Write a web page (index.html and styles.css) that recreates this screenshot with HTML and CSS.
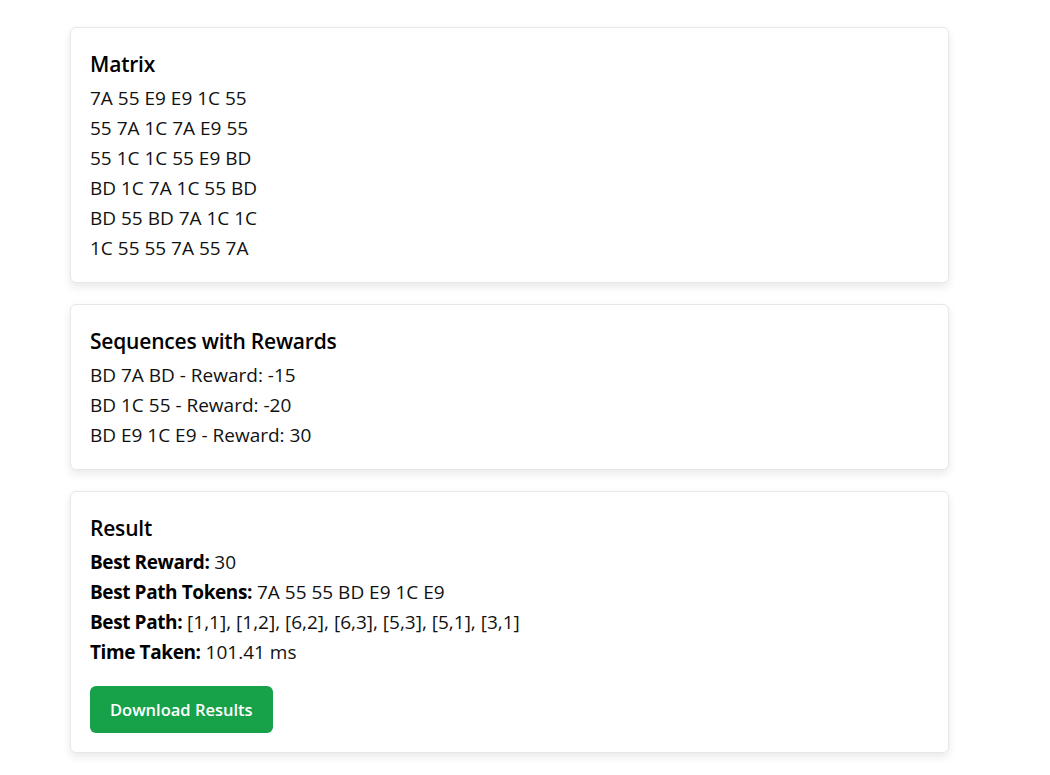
FILE: index.html
```html
<!DOCTYPE html>
<html>
<head>
<meta charset="utf-8">
<link rel="stylesheet" href="styles.css">
</head>
<body>
<div class="page">
  <section class="card">
    <h2 class="card-title">Matrix</h2>
    <div class="line">7A 55 E9 E9 1C 55</div>
    <div class="line">55 7A 1C 7A E9 55</div>
    <div class="line">55 1C 1C 55 E9 BD</div>
    <div class="line">BD 1C 7A 1C 55 BD</div>
    <div class="line">BD 55 BD 7A 1C 1C</div>
    <div class="line">1C 55 55 7A 55 7A</div>
  </section>
  <section class="card">
    <h2 class="card-title">Sequences with Rewards</h2>
    <div class="line">BD 7A BD - Reward: -15</div>
    <div class="line">BD 1C 55 - Reward: -20</div>
    <div class="line">BD E9 1C E9 - Reward: 30</div>
  </section>
  <section class="card">
    <h2 class="card-title">Result</h2>
    <div class="line"><strong>Best Reward:</strong> 30</div>
    <div class="line"><strong>Best Path Tokens:</strong> 7A 55 55 BD E9 1C E9</div>
    <div class="line"><strong>Best Path:</strong> [1,1], [1,2], [6,2], [6,3], [5,3], [5,1], [3,1]</div>
    <div class="line"><strong>Time Taken:</strong> 101.41 ms</div>
    <button class="btn">Download Results</button>
  </section>
</div>
</body>
</html>
```
FILE: styles.css
```css
html, body {
  margin: 0;
  padding: 0;
  background: #ffffff;
}
body {
  font-family: "Open Sans", "Noto Sans", sans-serif;
  color: #111111;
}
.page {
  padding: 27px 0 20px 70px;
  display: flex;
  flex-direction: column;
  gap: 21px;
  width: 879px;
}
.card {
  background: #fff;
  border: 1px solid #e5e7eb;
  border-radius: 6px;
  box-shadow: 0 4px 10px rgba(0, 0, 0, 0.09);
  padding: 19px;
  display: flex;
  flex-direction: column;
  align-items: flex-start;
}
.card-title {
  margin: 0;
  font-size: 21px;
  font-weight: 600;
  line-height: 35px;
  margin-bottom: 1px;
  color: #000;
  letter-spacing: -0.2px;
}
.line {
  font-size: 19px;
  line-height: 30px;
}
.line strong {
  font-weight: 700;
  color: #000;
  letter-spacing: -0.4px;
}
.btn {
  margin-top: 19px;
  font-family: inherit;
  background: #17a24a;
  color: #fff;
  border: none;
  border-radius: 6px;
  height: 47px;
  padding: 0 20px;
  font-size: 16.5px;
  font-weight: 600;
  cursor: pointer;
}
```
